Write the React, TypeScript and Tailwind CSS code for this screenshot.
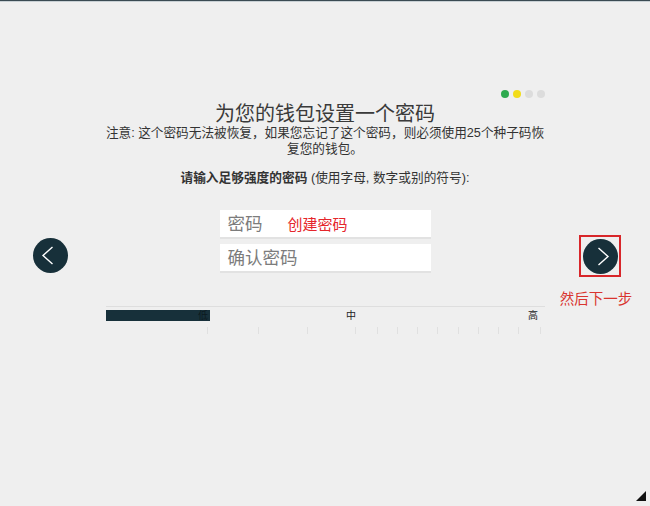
import React from "react";

const ticks = [101, 152, 201, 249, 271, 291, 311, 331, 352, 372, 392, 412, 434];

function Circle({ dir }: { dir: "left" | "right" }) {
  return (
    <div className="w-[35px] h-[35px] rounded-full bg-[#17303a] flex items-center justify-center">
      <svg width="35" height="35" viewBox="0 0 35 35">
        {dir === "left" ? (
          <polyline points="19.5,9 10,17.5 19.5,26" fill="none" stroke="#ffffff" strokeWidth="1.4" />
        ) : (
          <polyline points="15.5,9 25,17.5 15.5,26" fill="none" stroke="#ffffff" strokeWidth="1.4" />
        )}
      </svg>
    </div>
  );
}

export default function App() {
  return (
    <div className="relative w-[650px] h-[506px] overflow-hidden bg-[#efefef] text-[#333] font-['Liberation_Sans','Noto_Sans_CJK_SC',sans-serif]">
      <div className="h-px bg-[#3a4a52]" />
      <div className="h-px bg-[#c8d0d4]" />
      <div className="flex">
        <div className="w-[100px] flex justify-center pt-[236px]">
          <Circle dir="left" />
        </div>
        <div className="w-[450px] flex flex-col pt-[88px]">
          <div className="flex justify-end gap-[4px] pr-[5px] h-[8px]">
            <span className="w-[8px] h-[8px] rounded-full bg-[#2eaa4f]" />
            <span className="w-[8px] h-[8px] rounded-full bg-[#f2dc1a]" />
            <span className="w-[8px] h-[8px] rounded-full bg-[#dcdcdc]" />
            <span className="w-[8px] h-[8px] rounded-full bg-[#dcdcdc]" />
          </div>
          <div className="mt-[4px] text-[20px] leading-[24px] text-center text-[#3a3a3a]">
            为您的钱包设置一个密码
          </div>
          <div className="-mt-px text-[12.65px] leading-[16px] text-center text-[#333] whitespace-nowrap">
            注意: 这个密码无法被恢复，如果您忘记了这个密码，则必须使用25个种子码恢
            <br />
            复您的钱包。
          </div>
          <div className="mt-[13px] text-[12.7px] leading-[16px] text-center text-[#333] whitespace-nowrap">
            <span className="font-bold">请输入足够强度的密码</span> (使用字母, 数字或别的符号):
          </div>
          <div className="mt-[24px] w-[211px] mx-auto flex flex-col gap-[5px]">
            <div className="relative h-[29px] bg-white border-b-2 border-[#e2e2e2] flex items-center pl-[8px]">
              <span className="text-[17.5px] leading-[20px] text-[#7c7c7c]">密码</span>
              <span className="absolute left-[68px] top-[6px] text-[15px] leading-[18px] text-[#e5262b]">创建密码</span>
            </div>
            <div className="h-[29px] bg-white border-b-2 border-[#e2e2e2] flex items-center pl-[8px]">
              <span className="text-[17.5px] leading-[20px] text-[#7c7c7c]">确认密码</span>
            </div>
          </div>
          <div className="mt-[33px] ml-[6px] w-[439px] flex flex-col">
            <div className="h-px bg-[#dedede]" />
            <div className="relative mt-[3px] h-[11px]">
              <div className="w-[104px] h-[11px] bg-[#17303a]" />
              <span className="absolute left-[92px] top-0 text-[10px] leading-[11px] text-[#0c1a20]">低</span>
              <span className="absolute left-[240px] top-0 text-[10px] leading-[11px] text-[#222]">中</span>
              <span className="absolute left-[422px] top-0 text-[10px] leading-[11px] text-[#222]">高</span>
            </div>
            <svg className="mt-[6px]" width="439" height="7" viewBox="0 0 439 7">
              {ticks.map((x) => (
                <line key={x} x1={x + 0.5} y1="0" x2={x + 0.5} y2="7" stroke="#e0e0e0" strokeWidth="1" />
              ))}
            </svg>
          </div>
        </div>
        <div className="w-[100px] flex flex-col items-center pt-[233px]">
          <div className="w-[42px] h-[42px] border-2 border-[#d8262a] flex items-center justify-center">
            <Circle dir="right" />
          </div>
          <div className="mt-[12px] mr-[8px] text-[14.5px] leading-[20px] text-[#d9352f] whitespace-nowrap">然后下一步</div>
        </div>
      </div>
      <svg className="absolute right-[4px] bottom-[5px]" width="10" height="10" viewBox="0 0 10 10">
        <polygon points="10,0 10,10 0,10" fill="#111111" />
      </svg>
    </div>
  );
}
